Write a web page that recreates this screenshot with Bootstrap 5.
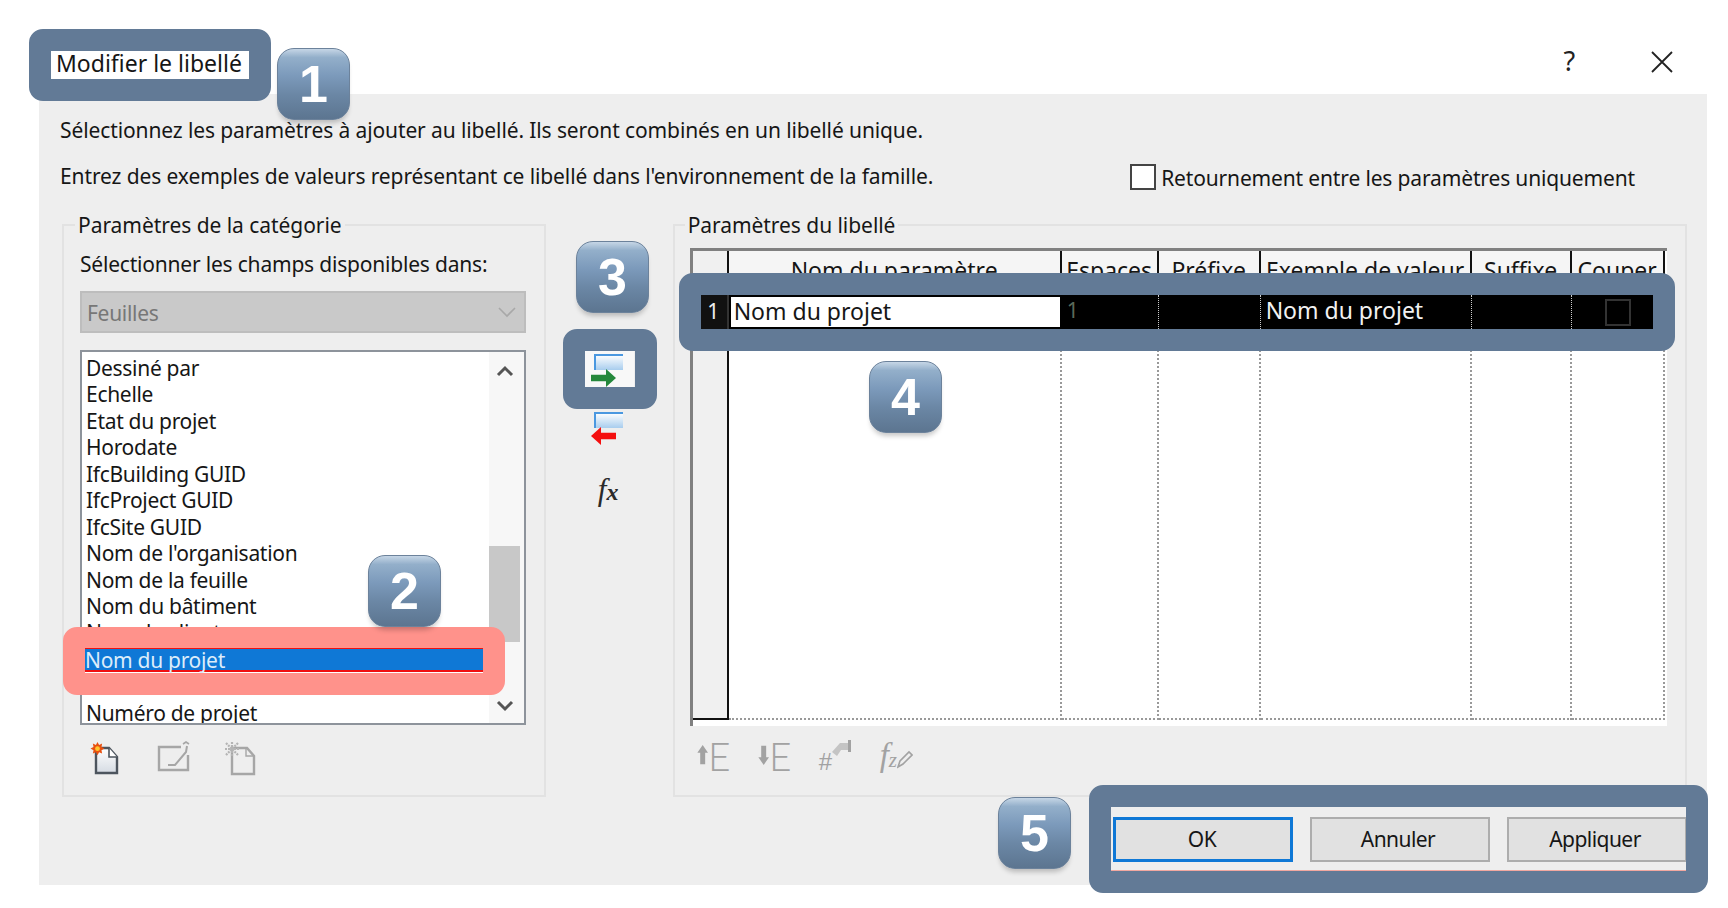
<!DOCTYPE html>
<html lang="fr">
<head>
<meta charset="utf-8">
<title>Modifier le libellé</title>
<link href="https://cdn.jsdelivr.net/npm/bootstrap@5.3.0/dist/css/bootstrap.min.css" rel="stylesheet">
<style>
html,body{background:#fff;margin:0;overflow:hidden}
body{font-family:"Noto Sans","Liberation Sans",sans-serif;font-size:21px;letter-spacing:-.11px;color:#161616;line-height:30px}
.stage{position:relative;width:1728px;height:908px;overflow:hidden}
.titlebar{height:94px;padding:0 55px 0 56px}
.title-txt{margin-top:48px;line-height:30px;font-size:23px;letter-spacing:0}
.help-mark{font-size:27px;margin:46px 76px 0 0;line-height:30px;color:#222}
.close-x{margin-top:51px}
.dlg{margin-left:39px;width:1668px;height:791px;background:#eee;padding:21px 20px 0 21px}
.intro-two{margin-top:16px;height:49px}
.chk-box{width:26px;height:26px;border:2px solid #444;background:#fff;margin:3px 5px 0 0}
.chk-lbl{margin:2px 52px 0 0;letter-spacing:-.15px}
.grp-row{margin-left:2px}
.grp{border:2px solid #e2e2e2;margin:0;padding:0;height:587px}
.grp legend{float:none;width:auto;font-size:inherit;line-height:30px;padding:0 3px;letter-spacing:-.05px}
.grp-left{width:484px;padding:0 18px 0 16px}
.grp-left legend{margin:0 0 0 -5px}
.grp-right{width:1015px;padding:0 18px 0 15px}
.grp-right legend{margin:0 0 0 -5px}
.mid-col{width:127px;padding-top:141px}
.zone-line{margin-top:9px;margin-bottom:12px;letter-spacing:-.2px}
.fake-select.form-select{height:42px;width:446px;border:2px solid #bdbdbd;border-radius:0;background-color:#c9c9c9;color:#777;font-size:21px;letter-spacing:-.3px;padding:4px 0 0 5px;opacity:1;background-size:20px 12px;background-position:right 7px center;background-image:url("data:image/svg+xml,%3Csvg xmlns='http://www.w3.org/2000/svg' viewBox='0 0 20 12'%3E%3Cpath d='M2 2l8 8 8-8' fill='none' stroke='%23a8a8a8' stroke-width='1.6'/%3E%3C/svg%3E")}
.pick-box{margin-top:17px;width:446px;height:375px;border:2px solid #8d939b;background:#fff;overflow:hidden}
.pick-list{flex:1;padding-top:3px;border-radius:0;min-width:0}
.pick-list .list-group-item{border:0;background:transparent;padding:0 0 0 4px;line-height:26.45px;height:26.45px;color:#161616;white-space:nowrap;border-radius:0;letter-spacing:-.3px}
.pick-list .list-group-item.active{background:#0f78d6;color:#dcecfa;margin:2px 6px 1.500px 3px;padding:0;height:24px;line-height:22px;border-top:1px solid #f01010;border-bottom:2px solid #f01010}
.sb-track{width:35px;background:#f7f7f7;flex:none}
.sb-thumb{width:31px;height:96px;background:#c8c8c8;margin-top:168px}
.sb-arrow{display:block;margin-left:7px}
.sb-up{margin-top:12px}
.sb-down{margin-top:57px}
.tool-row{margin-top:16px;padding-left:13px;gap:34px}
.tool-row svg{overflow:visible}
.grid-wrap{width:977px;height:478px;margin-top:8px;background:#fff;border-top:3px solid #808080;border-left:3px solid #808080}
.grid-tbl{table-layout:fixed;width:972px;border-collapse:separate;border-spacing:0;font-size:23px;letter-spacing:0}
.grid-tbl col:nth-child(1){width:36px}
.grid-tbl col:nth-child(2){width:333px}
.grid-tbl col:nth-child(3){width:97px}
.grid-tbl col:nth-child(4){width:102px}
.grid-tbl col:nth-child(5){width:211px}
.grid-tbl col:nth-child(6){width:100px}
.grid-tbl col:nth-child(7){width:93px}
.grid-tbl th{height:44px;background:#f5f5f5;font-weight:400;text-align:center;border-right:2px solid #111;padding:4px 0 0;vertical-align:top;white-space:nowrap;overflow:hidden}
.grid-tbl th.corner,.grid-tbl td.rowhead{background:#f0f0f0}
.grid-tbl .data-row td{height:34px;background:#000;color:#f2f2f2;border-right:1px dotted #ccc;padding:0 5px 3px;line-height:27px;white-space:nowrap}
.grid-tbl .data-row td.rowhead{background:#111;color:#eee;text-align:center;border-right:2px solid #333;padding:0 0 2px 7px;font-size:21px}
.grid-tbl .data-row td.edit-cell{background:#fff;color:#161616;border:2px solid #000;padding:0 3px 2px;line-height:26px;box-shadow:inset 0 0 0 1px #fff}
.grid-tbl .data-row td.dim{color:#5a6a5a;font-size:21px}
.grid-tbl .data-row td.chk-cell{padding:0 5px}
.grid-tbl .fill-row td{height:391px;background:#fff;border-right:2px dotted #999;border-bottom:2px dotted #999}
.grid-tbl .fill-row td.rowhead{background:#f0f0f0;border-right:2px solid #111;border-bottom:2px solid #111}
.row-chk{display:block;width:26px;height:27px;border:2px solid #333;margin:0 auto}
.grid-tools{margin-top:14px;padding-left:7px;gap:27px;height:32px}
.gt-item{width:34px;height:32px;color:#a2a2a2}
.gt-e{font-family:"Lato","Noto Sans",sans-serif;font-weight:300;font-size:39px;line-height:32px;letter-spacing:0}
.gt-f{font-family:"Liberation Serif",serif;font-style:italic;font-size:33px;line-height:30px;letter-spacing:0}
.gt-z{font-family:"Liberation Serif",serif;font-style:italic;font-size:21px;line-height:24px;letter-spacing:0;padding-top:8px}
.gt-hash{font-family:"Liberation Sans",sans-serif;font-size:24px;line-height:20px;letter-spacing:0;padding-top:12px}
.mv-btn{width:50px;height:36px;display:block}
.mv-first{background:#f8f8f8}
.mv-second{margin-top:22px}
.fx-mark{font-family:"Liberation Serif",serif;font-style:italic;font-size:31px;line-height:30px;margin:30px 2px 0 0;letter-spacing:0;color:#2a2a2a}
.fx-sub{font-size:24px;font-weight:700}
.foot-row{margin:20px 0 0 1053px}
.foot-btn.btn{width:180px;height:45px;background:#e1e1e1;border:2px solid #adadad;border-radius:0;color:#161616;font-size:21px;letter-spacing:-.55px;padding:0 4px 0 0;margin-left:17px}
.foot-btn.btn.is-def{border:3px solid #0f78d6;margin-left:0;padding:0 2px 0 0}
.hl-frame{position:absolute;border:22px solid #627a96;border-radius:14px;pointer-events:none}
.hl-one{left:29px;top:29px;width:242px;height:72px}
.hl-three{left:563px;top:329px;width:94px;height:80px}
.hl-four{left:679px;top:273px;width:996px;height:78px}
.hl-five{left:1089px;top:785px;width:619px;height:108px;box-shadow:inset 0 -1px 0 #f2a8a0}
.hl-two{left:63px;top:627px;width:442px;height:68px;border-color:#ff928b}
.num-tag{position:absolute;width:73px;height:72px;border-radius:17px;border:1px solid #6c829b;background:linear-gradient(180deg,#c6d6e6 0,#93afca 12%,#7c9abb 38%,#6b87a5 65%,#5c7590 100%);box-shadow:0 5px 5px -2px rgba(0,0,0,.22);color:#fff;font-family:"Liberation Sans",Arial,sans-serif;font-weight:700;font-size:52px;line-height:70px;text-align:center;letter-spacing:0}
.nt-1{left:277px;top:48px}
.nt-2{left:368px;top:555px}
.nt-3{left:576px;top:241px}
.nt-4{left:869px;top:361px}
.nt-5{left:998px;top:797px}
</style>
</head>
<body>
<div class="stage">
  <div class="titlebar d-flex">
    <div class="title-txt flex-grow-1">Modifier le libellé</div>
    <div class="help-mark">?</div>
    <svg class="close-x" width="22" height="22" viewBox="0 0 22 22"><path d="M1 1l20 20M21 1L1 21" stroke="#222" stroke-width="1.8" fill="none"/></svg>
  </div>
  <div class="dlg">
    <div>Sélectionnez les paramètres à ajouter au libellé. Ils seront combinés en un libellé unique.</div>
    <div class="intro-two d-flex justify-content-between">
      <div>Entrez des exemples de valeurs représentant ce libellé dans l'environnement de la famille.</div>
      <div class="d-flex align-items-start">
        <span class="chk-box"></span><span class="chk-lbl">Retournement entre les paramètres uniquement</span>
      </div>
    </div>
    <div class="grp-row d-flex">
      <fieldset class="grp grp-left">
        <legend>Paramètres de la catégorie</legend>
        <div class="zone-line">Sélectionner les champs disponibles dans:</div>
        <select class="form-select fake-select" disabled><option>Feuilles</option></select>
        <div class="pick-box d-flex">
          <div class="pick-list list-group">
            <div class="list-group-item">Dessiné par</div>
            <div class="list-group-item">Echelle</div>
            <div class="list-group-item">Etat du projet</div>
            <div class="list-group-item">Horodate</div>
            <div class="list-group-item">IfcBuilding GUID</div>
            <div class="list-group-item">IfcProject GUID</div>
            <div class="list-group-item">IfcSite GUID</div>
            <div class="list-group-item">Nom de l'organisation</div>
            <div class="list-group-item">Nom de la feuille</div>
            <div class="list-group-item">Nom du bâtiment</div>
            <div class="list-group-item">Nom du client</div>
            <div class="list-group-item active">Nom du projet</div>
            <div class="list-group-item">Numéro de la feuille</div>
            <div class="list-group-item">Numéro de projet</div>
          </div>
          <div class="sb-track">
            <svg class="sb-arrow sb-up" width="18" height="14" viewBox="0 0 18 14"><path d="M2 11l7-7 7 7" fill="none" stroke="#555" stroke-width="3"/></svg>
            <div class="sb-thumb"></div>
            <svg class="sb-arrow sb-down" width="18" height="14" viewBox="0 0 18 14"><path d="M2 3l7 7 7-7" fill="none" stroke="#555" stroke-width="3"/></svg>
          </div>
        </div>
        <div class="tool-row d-flex">
          <svg width="30" height="34" viewBox="0 0 30 34"><defs><linearGradient id="dg" x1="0" y1="0" x2="0" y2="1"><stop offset="0" stop-color="#fff"/><stop offset="1" stop-color="#d5dbe3"/></linearGradient></defs><path d="M3 7h13l8 9v16H3z" fill="url(#dg)" stroke="#4d555e" stroke-width="2.4"/><path d="M16 7v9h8" fill="#fff" stroke="#4d555e" stroke-width="1.6"/><path d="M4.500 1l1.600 3 3-1.400-.6 3.400 3 1.600-3 1.600.6 3.400-3-1.400-1.600 3-1.600-3-3 1.400.6-3.400-3-1.600 3-1.600-.6-3.400 3 1.400z" fill="#e8500f"/><circle cx="4.500" cy="7.700" r="2.400" fill="#ffc52e"/></svg>
          <svg width="34" height="30" viewBox="0 0 34 30"><path d="M24 6H2v23h29V14" fill="none" stroke="#a6a6a6" stroke-width="2.400"/><path d="M11 24h7l11-13 1-6" fill="none" stroke="#a6a6a6" stroke-width="2"/><path d="M26 3l3-2 3 2" fill="none" stroke="#a6a6a6" stroke-width="1.600"/></svg>
          <svg width="34" height="34" viewBox="0 0 34 34"><path d="M7 7h15l7 8v18H7z" fill="none" stroke="#a6a6a6" stroke-width="2.400"/><path d="M21 7v8h8" fill="none" stroke="#a6a6a6" stroke-width="1.400"/><path d="M1 2l12 12M13 2L1 14M7 1v14M0 8h14" stroke="#b4b4b4" stroke-width="2.200" stroke-dasharray="2 1" fill="none"/></svg>
        </div>
      </fieldset>
      <div class="mid-col d-flex flex-column align-items-center">
        <svg class="mv-btn mv-first" viewBox="0 0 50 36"><defs><linearGradient id="bg1" x1="0" y1="0" x2="0" y2="1"><stop offset="0" stop-color="#fff"/><stop offset="1" stop-color="#a8cdee"/></linearGradient></defs><path d="M11 19V4h28v15z" fill="url(#bg1)"/><path d="M11 19V4h28" fill="none" stroke="#4a98e0" stroke-width="2"/><path d="M7 27h17" stroke="#25883c" stroke-width="6.500"/><path d="M22 18l10 9-10 9z" fill="#25883c"/></svg>
        <svg class="mv-btn mv-second" viewBox="0 0 50 36"><defs><linearGradient id="bg2" x1="0" y1="0" x2="0" y2="1"><stop offset="0" stop-color="#fff"/><stop offset="1" stop-color="#a8cdee"/></linearGradient></defs><path d="M11 19V4h28v15z" fill="url(#bg2)"/><path d="M11 19V4h28" fill="none" stroke="#4a98e0" stroke-width="2"/><path d="M15 27h17" stroke="#f40f0f" stroke-width="6.500"/><path d="M17 18L7 27l10 9z" fill="#f40f0f"/></svg>
        <div class="fx-mark">f<span class="fx-sub">x</span></div>
      </div>
      <fieldset class="grp grp-right">
        <legend>Paramètres du libellé</legend>
        <div class="grid-wrap">
          <table class="grid-tbl">
            <colgroup><col><col><col><col><col><col><col></colgroup>
            <thead><tr><th class="corner"></th><th>Nom du paramètre</th><th>Espaces</th><th>Préfixe</th><th>Exemple de valeur</th><th>Suffixe</th><th>Couper</th></tr></thead>
            <tbody>
              <tr class="data-row"><td class="rowhead">1</td><td class="edit-cell">Nom du projet</td><td class="dim">1</td><td></td><td>Nom du projet</td><td></td><td class="chk-cell"><span class="row-chk"></span></td></tr>
              <tr class="fill-row"><td class="rowhead"></td><td></td><td></td><td></td><td></td><td></td><td></td></tr>
            </tbody>
          </table>
        </div>
        <div class="grid-tools d-flex">
          <div class="gt-item d-flex"><svg width="16" height="30" viewBox="0 0 16 30"><path d="M8 1l7.500 11H11.500v16h-7V12H.5z" fill="#a2a2a2"/></svg><span class="gt-e">E</span></div>
          <div class="gt-item d-flex"><svg width="16" height="30" viewBox="0 0 16 30"><path d="M8 29L.5 18h4V2h7v16h4z" fill="#a2a2a2"/></svg><span class="gt-e">E</span></div>
          <div class="gt-item d-flex"><span class="gt-hash">#</span><svg width="20" height="26" viewBox="0 0 20 26"><path d="M0 12L8 3h8v7H9l-4 6z" fill="#c4c4c4"/><path d="M16 0h3v12h-3z" fill="#a2a2a2"/></svg></div>
          <div class="gt-item d-flex"><span class="gt-f">f</span><span class="gt-z">z</span><svg width="16" height="30" viewBox="0 0 16 30"><path d="M1 27l2-6 9-9 3 3-9 9z" fill="none" stroke="#a2a2a2" stroke-width="1.600"/></svg></div>
        </div>
      </fieldset>
    </div>
    <div class="foot-row d-flex">
      <button class="btn foot-btn is-def">OK</button>
      <button class="btn foot-btn">Annuler</button>
      <button class="btn foot-btn">Appliquer</button>
    </div>
  </div>
  <div class="hl-frame hl-one"></div>
  <div class="hl-frame hl-two"></div>
  <div class="hl-frame hl-three"></div>
  <div class="hl-frame hl-four"></div>
  <div class="hl-frame hl-five"></div>
  <div class="num-tag nt-1">1</div>
  <div class="num-tag nt-2">2</div>
  <div class="num-tag nt-3">3</div>
  <div class="num-tag nt-4">4</div>
  <div class="num-tag nt-5">5</div>
</div>
<script src="https://cdn.jsdelivr.net/npm/bootstrap@5.3.0/dist/js/bootstrap.bundle.min.js"></script>
</body>
</html>
